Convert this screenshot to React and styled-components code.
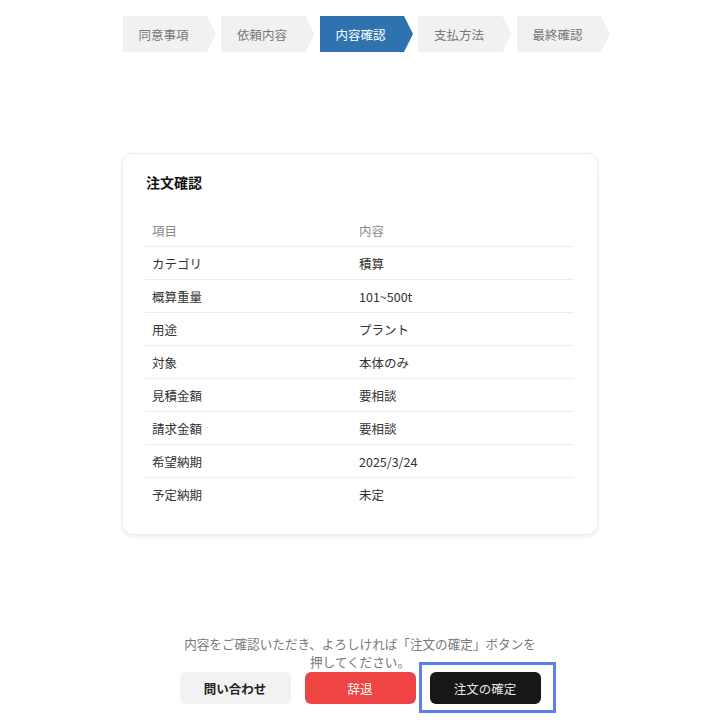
import React from "react";
import styled, { createGlobalStyle } from "styled-components";

const Global = createGlobalStyle`
  html, body { margin: 0; padding: 0; background: #fff; }
  body { font-family: "Noto Sans CJK JP", "Noto Sans", sans-serif; color: #222; }
`;

const Page = styled.div`
  width: 720px;
  height: 720px;
  display: flex;
  flex-direction: column;
  align-items: center;
  overflow: hidden;
`;

const Steps = styled.div`
  display: flex;
  gap: 5px;
  margin-top: 16px;
  width: 487px;
  margin-left: 12px;
`;

const Step = styled.div`
  width: 93.5px;
  height: 36px;
  flex: none;
  display: flex;
  align-items: center;
  padding-left: 16px;
  box-sizing: border-box;
  font-size: 12.5px;
  color: ${(p) => (p.$active ? "#fff" : "#777")};
  background: ${(p) => (p.$active ? "#2e72b0" : "#f1f1f1")};
  clip-path: polygon(0 0, calc(100% - 9px) 0, 100% 50%, calc(100% - 9px) 100%, 0 100%);
`;

const Card = styled.div`
  margin-top: 101px;
  width: 476px;
  box-sizing: border-box;
  padding: 18px 23px 23px 22px;
  border: 1px solid #ececec;
  border-radius: 10px;
  box-shadow: 0 2px 5px rgba(0, 0, 0, 0.07);
  background: #fff;
`;

const Title = styled.h2`
  margin: 0 0 0 1px;
  font-size: 14px;
  line-height: 20px;
  font-weight: 700;
  color: #111;
`;

const Table = styled.div`
  margin-top: 22px;
  display: grid;
  grid-template-columns: 207px 1fr;
`;

const Cell = styled.div`
  height: 33px;
  box-sizing: border-box;
  display: flex;
  align-items: center;
  padding-left: 7px;
  font-size: 12.5px;
  color: ${(p) => (p.$head ? "#8a8a8a" : "#333")};
  border-bottom: ${(p) => (p.$last ? "none" : "1px solid #ececec")};
`;

const Note = styled.p`
  margin: 100px 0 0;
  width: 400px;
  text-align: center;
  font-size: 12.6px;
  line-height: 18px;
  color: #7a7a7a;
`;

const Buttons = styled.div`
  display: flex;
  gap: 14px;
  margin-top: 1px;
`;

const Button = styled.button`
  position: relative;
  width: 111px;
  height: 32px;
  border: none;
  border-radius: 6px;
  font-family: inherit;
  font-size: 12.5px;
  font-weight: ${(p) => (p.$variant === "light" ? 700 : 400)};
  color: ${(p) => (p.$variant === "light" ? "#222" : p.$variant === "dark" ? "#e6e6e6" : "#fff")};
  background: ${(p) =>
    p.$variant === "light" ? "#f2f2f2" : p.$variant === "danger" ? "#ef4444" : "#171717"};
`;

const FocusRing = styled.span`
  position: absolute;
  left: -11px;
  right: -15px;
  top: -10px;
  bottom: -9px;
  border: 3px solid #5b7ff3;
  pointer-events: none;
`;

const steps = ["同意事項", "依頼内容", "内容確認", "支払方法", "最終確認"];
const rows = [
  ["カテゴリ", "積算"],
  ["概算重量", "101~500t"],
  ["用途", "プラント"],
  ["対象", "本体のみ"],
  ["見積金額", "要相談"],
  ["請求金額", "要相談"],
  ["希望納期", "2025/3/24"],
  ["予定納期", "未定"],
];

export default function App() {
  return (
    <Page>
      <Global />
      <Steps>
        {steps.map((s, i) => (
          <Step key={s} $active={i === 2}>
            {s}
          </Step>
        ))}
      </Steps>
      <Card>
        <Title>注文確認</Title>
        <Table>
          <Cell $head>項目</Cell>
          <Cell $head>内容</Cell>
          {rows.map(([k, v], i) => (
            <React.Fragment key={k}>
              <Cell $last={i === rows.length - 1}>{k}</Cell>
              <Cell $last={i === rows.length - 1}>{v}</Cell>
            </React.Fragment>
          ))}
        </Table>
      </Card>
      <Note>
        内容をご確認いただき、よろしければ「注文の確定」ボタンを
        <br />
        押してください。
      </Note>
      <Buttons>
        <Button $variant="light">問い合わせ</Button>
        <Button $variant="danger">辞退</Button>
        <Button $variant="dark">
          注文の確定
          <FocusRing />
        </Button>
      </Buttons>
    </Page>
  );
}
